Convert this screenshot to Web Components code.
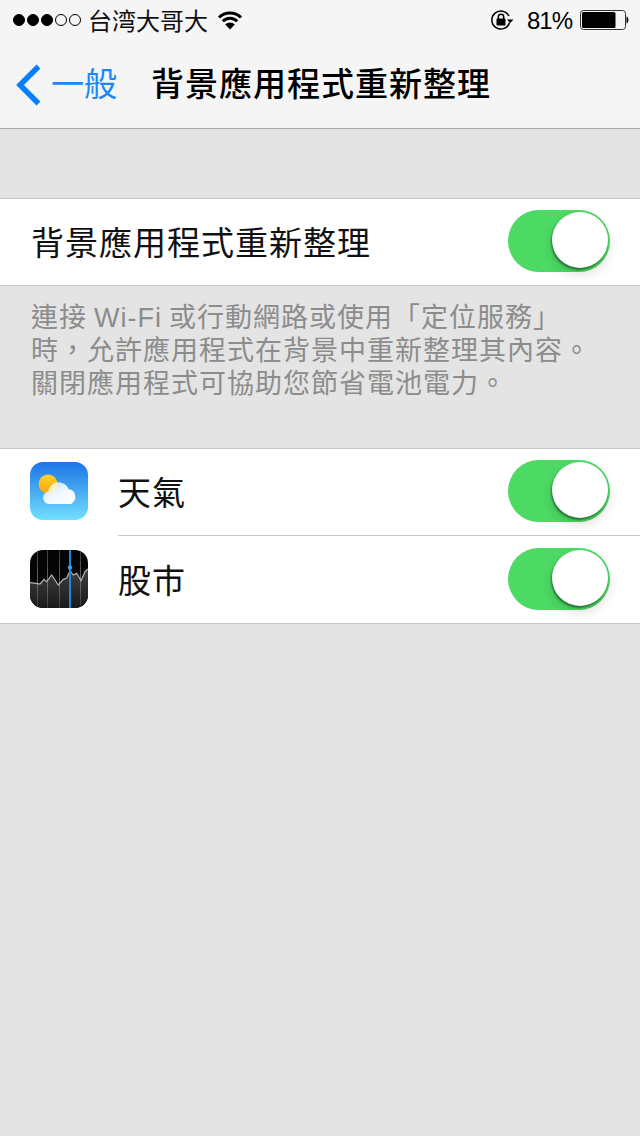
<!DOCTYPE html>
<html>
<head>
<meta charset="utf-8">
<title>背景應用程式重新整理</title>
<style>
  html, body { margin: 0; background: #e4e4e4; }
  body { width: 640px; height: 1136px; overflow: hidden; font-family: "Liberation Sans", "Noto Sans CJK TC", sans-serif; }
</style>
</head>
<body>
<settings-screen>
  <status-bar></status-bar>
  <nav-bar back="一般" heading="背景應用程式重新整理"></nav-bar>
  <table-group style="margin-top:69px">
    <table-row label="背景應用程式重新整理" short></table-row>
  </table-group>
  <group-note>連接 Wi-Fi 或行動網路或使用「定位服務」<br>時，允許應用程式在背景中重新整理其內容。<br>關閉應用程式可協助您節省電池電力。</group-note>
  <table-group>
    <table-row label="天氣" short inset>
      <svg slot="icon" width="58" height="58" viewBox="0 0 58 58">
        <defs>
          <linearGradient id="sky" x1="0" y1="0" x2="0" y2="1">
            <stop offset="0" stop-color="#1c74e6"/><stop offset="1" stop-color="#72e0fd"/>
          </linearGradient>
          <linearGradient id="sun" x1="0" y1="0" x2="0" y2="1">
            <stop offset="0" stop-color="#fcd32c"/><stop offset="1" stop-color="#f5a60a"/>
          </linearGradient>
          <linearGradient id="cloud" x1="0" y1="0" x2="1" y2="1">
            <stop offset="0" stop-color="#fff" stop-opacity=".6"/><stop offset=".5" stop-color="#fff" stop-opacity=".92"/><stop offset="1" stop-color="#fff"/>
          </linearGradient>
        </defs>
        <rect width="58" height="58" rx="13" fill="url(#sky)"/>
        <circle cx="18" cy="22" r="9.500" fill="url(#sun)"/>
        <path d="M19.500 42a6.300 6.300 0 0 1-1.200-12.500a9.800 9.800 0 0 1 5.200-7.700a10.500 10.500 0 0 1 15 5.200a8 8 0 0 1 2.500 15z" fill="url(#cloud)"/>
      </svg>
    </table-row>
    <table-row label="股市">
      <svg slot="icon" width="58" height="58" viewBox="0 0 58 58">
        <defs>
          <linearGradient id="fade" x1="0" y1="0" x2="0" y2="1">
            <stop offset="0" stop-color="#404040"/><stop offset="1" stop-color="#191919"/>
          </linearGradient>
          <linearGradient id="rule" x1="0" y1="0" x2="0" y2="1">
            <stop offset="0" stop-color="#3a3a3a"/><stop offset=".6" stop-color="#6a6a6a"/><stop offset="1" stop-color="#3a3a3a"/>
          </linearGradient>
          <clipPath id="tile"><rect width="58" height="58" rx="13"/></clipPath>
        </defs>
        <g clip-path="url(#tile)">
          <rect width="58" height="58" fill="#050505"/>
          <path d="M0 32.700L6 33.300 10 34 14 29.300 16.700 31.700 21.700 25 28.300 35 33.300 29.300 36.700 28.300 40 20.700 43.300 25 46.700 23.300 51 30.700 55 21.700 58 19V58H0z" fill="url(#fade)"/>
          <path d="M7.500 0V58M17.500 0V58M29.500 0V58M50.500 0V58" stroke="url(#rule)" stroke-width="1" fill="none"/>
          <path d="M0 32.700L6 33.300 10 34 14 29.300 16.700 31.700 21.700 25 28.300 35 33.300 29.300 36.700 28.300 40 20.700 43.300 25 46.700 23.300 51 30.700 55 21.700 58 19" fill="none" stroke="#b4b4b4" stroke-width="1.200"/>
          <rect x="39" y="0" width="2" height="58" fill="#1f86d8"/>
          <circle cx="40" cy="17.500" r="2.200" fill="#3aa0f0"/>
        </g>
      </svg>
    </table-row>
  </table-group>
</settings-screen>

<script>
/**
 * Small helper, every element builds its shadow root from a template string.
 *
 * @param {string} html - The markup and styles.
 * @returns {HTMLTemplateElement} The template.
 */
function tpl (html) {
  const t = document.createElement('template')
  t.innerHTML = html
  return t
}

const screenTemplate = tpl(`
<style>
  :host { display: flex; flex-direction: column; width: 640px; min-height: 1136px; background: #e4e4e4; }
</style>
<slot></slot>
`)

customElements.define('settings-screen', class extends HTMLElement {
  constructor () {
    super()
    this.attachShadow({ mode: 'open' }).appendChild(screenTemplate.content.cloneNode(true))
  }
})

const statusTemplate = tpl(`
<style>
  :host { display: flex; align-items: center; height: 40px; background: #f5f5f5; color: #000; padding: 0 11px 0 13px; box-sizing: border-box; }
  .dots { display: flex; gap: 2px; }
  .dots i { width: 12px; height: 12px; border-radius: 50%; border: 1.500px solid #000; box-sizing: border-box; }
  .dots i.on { background: #000; }
  .carrier { margin: 0 0 2px 7px; font-size: 24px; color: #111; }
  .wifi { margin-left: 9px; display: block; }
  .spacer { flex: 1; }
  .lock { display: block; margin-right: 13px; }
  .pct { font-size: 24px; letter-spacing: -1px; margin-top: 1px; }
  .batt { display: block; margin-left: 8px; }
</style>
<div class="dots"><i class="on"></i><i class="on"></i><i class="on"></i><i></i><i></i></div>
<span class="carrier">台湾大哥大</span>
<svg class="wifi" width="26" height="20" viewBox="0 0 26 20">
  <path d="M2 7.500a15.500 15.500 0 0 1 22 0M5.800 11.300a10 10 0 0 1 14.400 0" fill="none" stroke="#000" stroke-width="3"/>
  <path d="M13 19.500l-4.800-5a6.500 6.500 0 0 1 9.600 0z" fill="#000"/>
</svg>
<span class="spacer"></span>
<svg class="lock" width="24" height="22" viewBox="0 0 24 22">
  <path d="M19.500 13.500a9 9 0 1 1-.6-6.500" fill="none" stroke="#000" stroke-width="1.500"/>
  <path d="M17 10.500h6.500l-3.200 3.500z" fill="#000"/>
  <rect x="6.500" y="9.500" width="9" height="7" rx="1" fill="#000"/>
  <path d="M8.300 10V8a2.700 2.700 0 0 1 5.400 0v2" fill="none" stroke="#000" stroke-width="1.500"/>
</svg>
<span class="pct">81%</span>
<svg class="batt" width="49" height="20" viewBox="0 0 49 20">
  <rect x=".5" y=".5" width="45" height="19" rx="3" fill="none" stroke="#333" stroke-width="1"/>
  <rect x="2" y="2" width="33.500" height="16" rx="1.500" fill="#000"/>
  <path d="M46.500 6.500c2.500 .3 2.500 6.700 0 7z" fill="#000"/>
</svg>
`)

customElements.define('status-bar', class extends HTMLElement {
  constructor () {
    super()
    this.attachShadow({ mode: 'open' }).appendChild(statusTemplate.content.cloneNode(true))
  }
})

const navTemplate = tpl(`
<style>
  :host { display: flex; align-items: center; height: 89px; background: #f5f5f5; border-bottom: 1px solid #a9a9a9; box-sizing: border-box; padding: 0 0 4px 16px; font-size: 33px; letter-spacing: 1px; font-family: "Liberation Sans", "Noto Sans CJK JP", sans-serif; }
  svg { display: block; margin-top: 5px; }
  #back { color: #1a87fb; margin-left: 10px; width: 68px; letter-spacing: 0; white-space: nowrap; }
  #heading { color: #000; font-weight: 500; margin-left: 32px; white-space: nowrap; }
</style>
<svg width="25" height="42" viewBox="0 0 25 42"><path d="M22.500 2.500L4 21l18.500 18.500" fill="none" stroke="#0a7ffb" stroke-width="5.500"/></svg>
<span id="back"></span>
<span id="heading"></span>
`)

customElements.define('nav-bar', class extends HTMLElement {
  constructor () {
    super()
    this.attachShadow({ mode: 'open' }).appendChild(navTemplate.content.cloneNode(true))
    this.shadowRoot.querySelector('#back').textContent = this.getAttribute('back')
    this.shadowRoot.querySelector('#heading').textContent = this.getAttribute('heading')
  }
})

const groupTemplate = tpl(`
<style>
  :host { display: block; background: #fff; border-top: 1px solid #c8c8c8; border-bottom: 1px solid #c8c8c8; }
</style>
<slot></slot>
`)

customElements.define('table-group', class extends HTMLElement {
  constructor () {
    super()
    this.attachShadow({ mode: 'open' }).appendChild(groupTemplate.content.cloneNode(true))
  }
})

const noteTemplate = tpl(`
<style>
  :host { display: block; height: 162px; box-sizing: border-box; padding: 16px 0 0 31px; color: #8c8c8c; font-size: 27px; letter-spacing: 1px; word-spacing: -1.500px; line-height: 33px; white-space: nowrap; }
</style>
<slot></slot>
`)

customElements.define('group-note', class extends HTMLElement {
  constructor () {
    super()
    this.attachShadow({ mode: 'open' }).appendChild(noteTemplate.content.cloneNode(true))
  }
})

const rowTemplate = tpl(`
<style>
  :host { display: block; }
  .row { display: flex; align-items: center; height: 87px; box-sizing: border-box; padding: 0 30px 1px 30px; font-size: 33px; letter-spacing: 1px; color: #111; font-family: "Liberation Sans", "Noto Sans CJK JP", sans-serif; }
  :host([short]) .row { height: 86px; padding-bottom: 2px; }
  slot[name=icon]::slotted(svg) { display: block; margin-right: 29px; }
  #label { flex: 1; margin-left: 1px; white-space: nowrap; }
  :host([inset]) .sep { margin-left: 118px; border-bottom: 1px solid #c8c8c8; }
</style>
<div class="row">
  <slot name="icon"></slot>
  <span id="label"></span>
  <on-switch></on-switch>
</div>
<div class="sep"></div>
`)

customElements.define('table-row', class extends HTMLElement {
  constructor () {
    super()
    this.attachShadow({ mode: 'open' }).appendChild(rowTemplate.content.cloneNode(true))
    this.shadowRoot.querySelector('#label').textContent = this.getAttribute('label')
  }
})

const switchTemplate = tpl(`
<style>
  :host { display: block; position: relative; width: 102px; height: 62px; border-radius: 31px; background: #4cd964; }
  .knob { position: absolute; right: 2px; top: 2px; width: 56px; height: 56px; border-radius: 50%; background: #fff; box-shadow: -1px 2px 2px rgba(0,0,0,.4), 0 6px 12px rgba(0,0,0,.14); }
</style>
<div class="knob"></div>
`)

customElements.define('on-switch', class extends HTMLElement {
  constructor () {
    super()
    this.attachShadow({ mode: 'open' }).appendChild(switchTemplate.content.cloneNode(true))
  }
})
</script>
</body>
</html>
